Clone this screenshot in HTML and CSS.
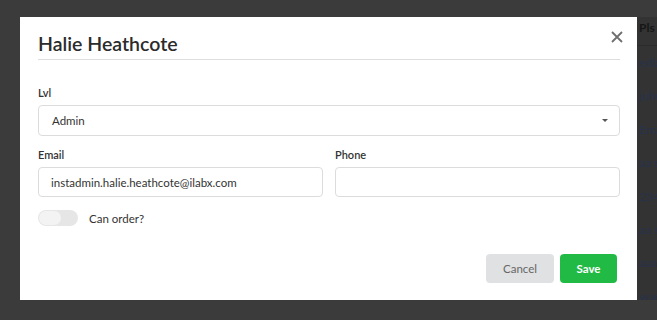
FILE: index.html
```html
<!DOCTYPE html>
<html lang="en">
<head>
<meta charset="UTF-8" />
<title>Edit user</title>
<link rel="stylesheet" href="styles.css">
</head>
<body>

<!-- page behind the dimmer -->
<div class="page">
  <div class="user-table">
    <div class="cell head">Pls</div>
    <div class="cell">edla</div>
    <div class="cell">juhu</div>
    <div class="cell">Ema</div>
    <div class="cell">aa s</div>
    <div class="cell">234</div>
    <div class="cell">aa s</div>
    <div class="cell">aaa</div>
    <div class="cell">wad</div>
  </div>
</div>

<!-- modal -->
<div class="modal">
  <div class="modal-header">
    <h2>Halie Heathcote</h2>
    <span class="close">
      <svg width="12" height="12" viewBox="0 0 12 12"><path d="M1 1L11 11M11 1L1 11" stroke="#6f6f6f" stroke-width="1.8" fill="none"/></svg>
    </span>
  </div>

  <div class="modal-body">
    <div class="field">
      <label>Lvl</label>
      <div class="select">
        <span>Admin</span>
        <i class="caret"></i>
      </div>
    </div>

    <div class="row">
      <div class="field">
        <label>Email</label>
        <input class="input" type="text" value="instadmin.halie.heathcote@ilabx.com">
      </div>
      <div class="field">
        <label>Phone</label>
        <input class="input" type="text" value="">
      </div>
    </div>

    <div class="toggle-row">
      <span class="toggle"><span class="knob"></span></span>
      <span class="toggle-label">Can order?</span>
    </div>
  </div>

  <div class="modal-footer">
    <button class="btn cancel">Cancel</button>
    <button class="btn save">Save</button>
  </div>
</div>

</body>
</html>
```

FILE: styles.css
```css
/* base */
body {
  margin: 0;
  background: #3b3b3b;
  font-family: 'Lato', 'Liberation Sans', sans-serif;
  color: #333;
}

/* page behind the dimmer */
.page {
  display: flex;
  justify-content: flex-end;
  padding-top: 17px;
}
.user-table {
  width: 20px;
  height: 283px;
  background: #333;
  overflow: hidden;
  white-space: nowrap;
}
.cell {
  height: 33.4px;
  line-height: 33px;
  padding-left: 2px;
  font-size: 12px;
  color: #28324a;
}
.cell.head {
  height: 28px;
  line-height: 22px;
  color: #161616;
  font-weight: 700;
  border-bottom: 1px solid #2c2c2c;
}

/* modal */
.modal {
  position: absolute;
  left: 20px;
  top: 17px;
  width: 617px;
  height: 283px;
  background: #fff;
  box-sizing: border-box;
}
.modal-header {
  margin: 0 17px 0 18px;
  padding-top: 15px;
  padding-bottom: 3px;
  border-bottom: 1px solid #ddd;
  position: relative;
}
.modal-header h2 {
  margin: 0;
  font-size: 19.5px;
  line-height: 24px;
  font-weight: 600;
  color: #2b2b2b;
}
.close {
  position: absolute;
  right: -3px;
  top: 14px;
  line-height: 0;
}

.modal-body {
  padding: 26px 17px 0 18px;
}
.field label {
  display: block;
  font-size: 11px;
  font-weight: 600;
  line-height: 14px;
  color: #333;
  margin-bottom: 5px;
}
.select {
  height: 31px;
  border: 1px solid #dcdcdc;
  border-radius: 4px;
  box-sizing: border-box;
  display: flex;
  align-items: center;
  justify-content: space-between;
  padding: 0 11px 0 13px;
  font-size: 11.5px;
  color: #333;
}
.caret {
  width: 0;
  height: 0;
  border-left: 3.5px solid transparent;
  border-right: 3.5px solid transparent;
  border-top: 3.5px solid #555;
}

.row {
  display: grid;
  grid-template-columns: 285px 1fr;
  gap: 12px;
  margin-top: 12px;
}
.input {
  display: block;
  width: 100%;
  height: 30px;
  box-sizing: border-box;
  border: 1px solid #dcdcdc;
  border-radius: 4px;
  padding: 0 12px;
  font-family: 'Lato', 'Liberation Sans', sans-serif;
  font-size: 11.5px;
  color: #333;
  outline: none;
}

.toggle-row {
  display: flex;
  align-items: center;
  margin-top: 12px;
  height: 18px;
}
.toggle {
  width: 40px;
  height: 16px;
  border-radius: 8px;
  background: #e6e6e6;
  position: relative;
}
.knob {
  position: absolute;
  left: 1px;
  top: 1px;
  width: 22px;
  height: 14px;
  border-radius: 7px;
  background: #f3f3f3;
}
.toggle-label {
  margin-left: 11px;
  font-size: 11.5px;
  color: #333;
}

.modal-footer {
  display: flex;
  justify-content: flex-end;
  gap: 6px;
  padding: 27px 20px 0;
}
.btn {
  height: 29px;
  border: none;
  border-radius: 4px;
  font-family: 'Lato', 'Liberation Sans', sans-serif;
  font-size: 11.5px;
  cursor: pointer;
}
.cancel {
  width: 68px;
  background: #e0e1e2;
  color: #666;
}
.save {
  width: 57px;
  background: #21ba45;
  color: #fff;
  font-weight: 700;
}
```
